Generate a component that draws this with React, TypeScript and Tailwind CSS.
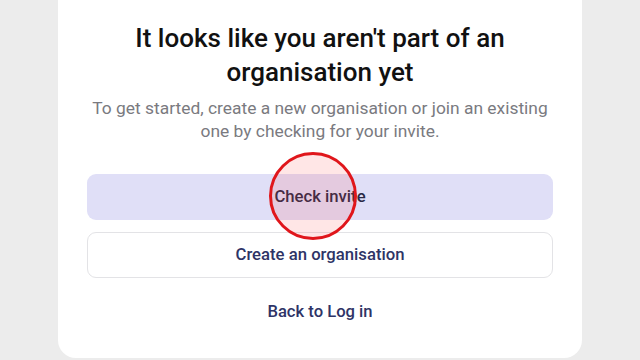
export default function App() {
  return (
    <div className="relative h-[360px] w-[640px] overflow-hidden bg-[#ececec] font-['Roboto',sans-serif]">
      <div className="mx-auto flex h-[358px] w-[524px] flex-col items-center rounded-b-[18px] bg-white px-[29px] pt-[21px]">
        <h1 className="text-center text-[26px] font-medium leading-[34px] text-[#111111]">
          It looks like you aren't part of an organisation yet
        </h1>
        <p className="mt-[8px] text-center text-[17.4px] leading-[23px] text-[#7a7a80]">
          To get started, create a new organisation or join an existing one by checking for your invite.
        </p>
        <button className="mt-[31px] flex h-[46px] w-full items-center justify-center rounded-[9px] bg-[#e0dff7] text-[16.7px] font-medium text-[#2b2a45]">
          Check invite
        </button>
        <button className="mt-[12px] flex h-[46px] w-full items-center justify-center rounded-[9px] border border-[#e3e3e6] bg-white text-[16.7px] font-medium text-[#2e3466]">
          Create an organisation
        </button>
        <button className="mt-[22px] h-[24px] text-[16.6px] font-medium leading-[24px] text-[#2e3466]">
          Back to Log in
        </button>
      </div>
      <div className="pointer-events-none absolute left-[269px] top-[152px] h-[88px] w-[88px] rounded-full border-[3px] border-[#e0161b] bg-[rgba(255,60,60,0.13)]" />
    </div>
  )
}
